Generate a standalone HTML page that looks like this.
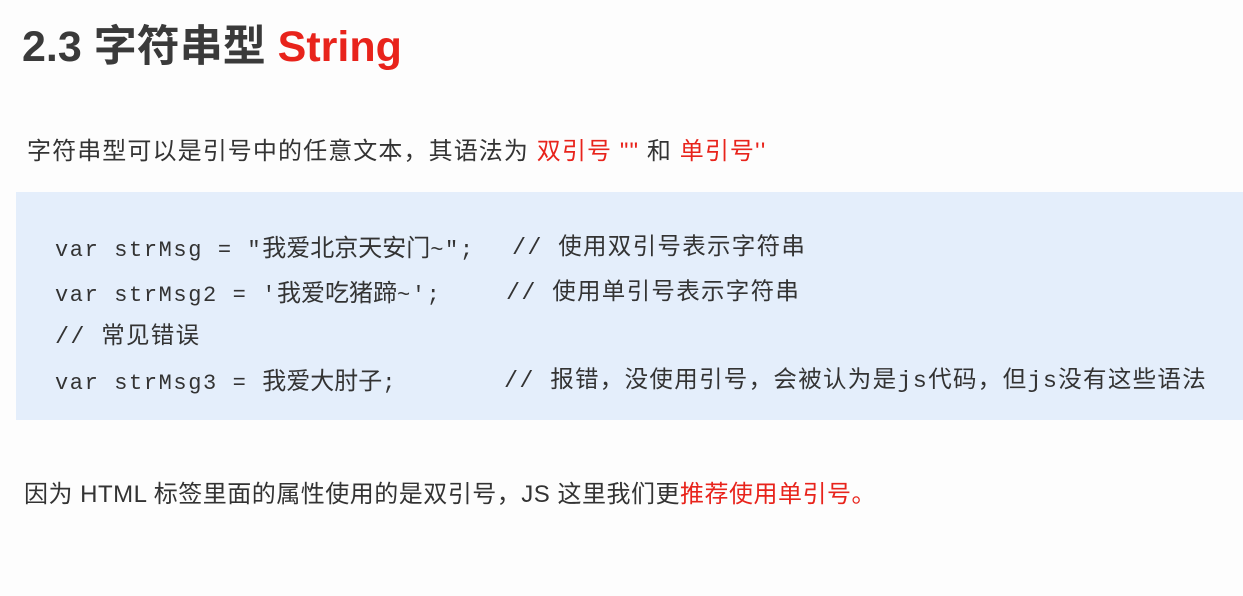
<!DOCTYPE html>
<html><head><meta charset="utf-8"><style>
body{margin:0;width:1243px;height:596px;background:#fdfdfd;position:relative;overflow:hidden;font-family:"Liberation Sans","Noto Sans CJK SC",sans-serif;color:#333}
.a{position:absolute;white-space:nowrap}
.t{left:22px;top:12px;font-size:43px;font-weight:bold;color:#3a3a3a}
.r{color:#e8231b}
.p{font-size:24px;color:#333}
.box{position:absolute;left:16px;top:192px;width:1227px;height:228px;background:#e4eefb}
.c{font-family:"Liberation Mono","Noto Sans CJK SC",monospace;font-size:22px;letter-spacing:1.6px;color:#333}
.cm{font-family:"Liberation Mono","Noto Sans CJK SC",monospace;font-size:23.5px;letter-spacing:1.3px;color:#333}
.k{font-size:24px;letter-spacing:0}
</style></head><body>
<div class="a t">2.3 字符串型 <span class="r">String</span></div>
<div class="a p" style="left:27px;top:131px;letter-spacing:1.1px">字符串型可以是引号中的任意文本，其语法为 <span class="r">双引号 ""</span> 和 <span class="r">单引号''</span></div>
<div class="box"></div>
<div class="a c" style="left:55px;top:228px">var strMsg = "<span class="k">我爱北京天安门</span>~";</div>
<div class="a cm" style="left:512px;top:227px">// 使用双引号表示字符串</div>
<div class="a c" style="left:55px;top:273px">var strMsg2 = '<span class="k">我爱吃猪蹄</span>~';</div>
<div class="a cm" style="left:506px;top:272px">// 使用单引号表示字符串</div>
<div class="a cm" style="left:55px;top:316px">// 常见错误</div>
<div class="a c" style="left:55px;top:361px">var strMsg3 = <span class="k">我爱大肘子</span>;</div>
<div class="a cm" style="left:504px;top:360px">// 报错，没使用引号，会被认为是js代码，但js没有这些语法</div>
<div class="a p" style="left:24px;top:474px;letter-spacing:0.5px">因为 HTML 标签里面的属性使用的是双引号，JS 这里我们更<span class="r">推荐使用单引号。</span></div>
</body></html>
